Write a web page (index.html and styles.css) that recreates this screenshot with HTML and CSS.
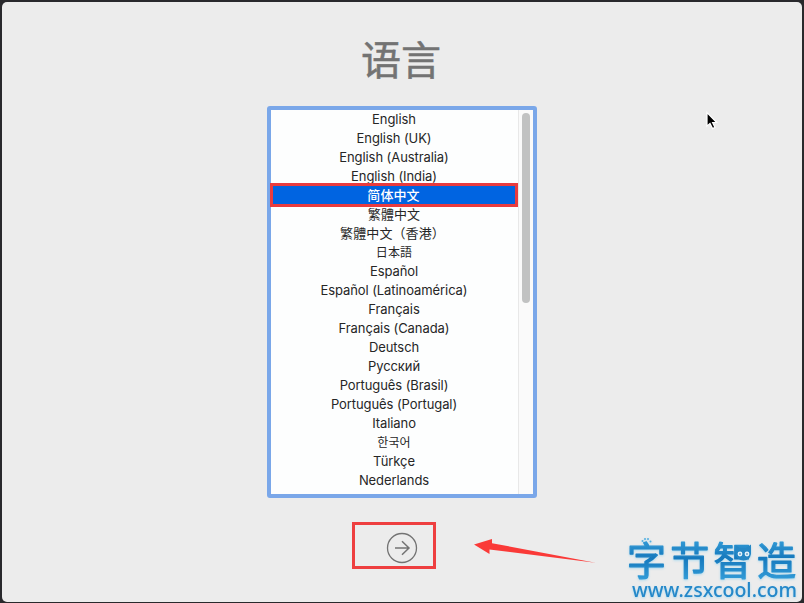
FILE: index.html
```
<!DOCTYPE html>
<html lang="zh-CN">
<head>
<meta charset="utf-8">
<title>语言</title>
<link rel="stylesheet" href="styles.css">
</head>
<body>
<main class="window">
  <h1 class="title">语言</h1>
  <div class="listbox">
    <ul class="languages">
      <li>English</li>
      <li>English (UK)</li>
      <li>English (Australia)</li>
      <li>English (India)</li>
      <li class="selected cjk">简体中文</li>
      <li class="cjk" lang="zh-TW">繁體中文</li>
      <li class="cjk wide" lang="zh-TW">繁體中文（香港）</li>
      <li class="cjk small" lang="ja">日本語</li>
      <li>Español</li>
      <li>Español (Latinoamérica)</li>
      <li>Français</li>
      <li>Français (Canada)</li>
      <li>Deutsch</li>
      <li>Русский</li>
      <li>Português (Brasil)</li>
      <li>Português (Portugal)</li>
      <li>Italiano</li>
      <li class="cjk small" lang="ko">한국어</li>
      <li>Türkçe</li>
      <li>Nederlands</li>
    </ul>
    <div class="track"><div class="thumb"></div></div>
  </div>
  <div class="next">
    <svg width="32" height="32" viewBox="0 0 32 32" fill="none" stroke="#737373">
      <circle cx="16" cy="16" r="14.5" stroke-width="1.3"/>
      <path d="M9 16H23M16 9.2L23 16L16 22.8" stroke-width="1.5"/>
    </svg>
  </div>
  <svg class="pointer-arrow" width="122" height="28" viewBox="0 0 122 28">
    <path d="M0 9.500L18 4V8.200L121.500 27.800L15.500 14.500V19Z" fill="#fa3a38"/>
  </svg>
  <svg class="cursor" width="16" height="22" viewBox="0 0 16 22">
    <path d="M2 1.500V15.200L5 12.400L7.600 17.600L10 16.400L7.600 11.500H11.700Z" fill="#000" stroke="#fff" stroke-width="1.2"/>
  </svg>
  <svg class="watermark" width="184" height="72" viewBox="620 531 184 72">
    <defs>
      <linearGradient id="blue" x1="0" y1="0" x2="0" y2="1">
        <stop offset="0" stop-color="#42ade4"/>
        <stop offset=".5" stop-color="#1679bd"/>
        <stop offset="1" stop-color="#3aa5df"/>
      </linearGradient>
    </defs>
    <text class="brand" x="627" y="575">字节智造</text>
    <g fill="#55afe0">
      <circle cx="642.500" cy="541" r="1"/><circle cx="645" cy="539" r="1"/><circle cx="648" cy="539" r="1"/><circle cx="650.500" cy="541.500" r="1"/>
    </g>
    <path d="M735.500 545L740 548H746L751 544.500V554Q750 560 743.500 560.500Q737 560 735.500 554Z" fill="#2587c5"/>
    <circle cx="740" cy="554" r="2.400" fill="#e4f3fb"/><circle cx="747" cy="554" r="2.400" fill="#e4f3fb"/>
    <circle cx="740" cy="554" r=".8" fill="#17699f"/><circle cx="747" cy="554" r=".8" fill="#17699f"/>
    <text class="site" x="632" y="596.500" textLength="165" lengthAdjust="spacingAndGlyphs">www.zsxcool.com</text>
  </svg>
</main>
</body>
</html>
```
FILE: styles.css
```
* { box-sizing: border-box; }
body {
  margin: 0;
  padding: 2px 2px 1px;
  height: 603px;
  background: #29292c;
  overflow: hidden;
  font-family: Inter, "Noto Sans CJK SC", sans-serif;
}
.window {
  position: relative;
  display: flex;
  flex-direction: column;
  align-items: center;
  height: 600px;
  border-radius: 5px;
  background: #ececec;
}
.title {
  margin: 26px 2px 0 0;
  height: 78px;
  font: 400 40px/60px "Noto Sans CJK SC", sans-serif;
  color: #737373;
  -webkit-text-stroke: .5px #737373;
}
.listbox {
  display: flex;
  width: 270px;
  height: 392px;
  border: 4px solid #7aa7e9;
  border-radius: 3px;
  background: #fdfefe;
}
.languages {
  flex: 1;
  margin: 0;
  padding: 0;
  list-style: none;
  text-align: center;
  font-size: 13px;
  line-height: 19px;
  letter-spacing: -.08px;
  color: #262626;
}
.languages li { height: 19px; padding-right: 1px; white-space: nowrap; }
.languages .cjk {
  padding-right: 1px;
  font-family: "Noto Sans CJK SC", sans-serif;
  line-height: 17px;
  letter-spacing: .1px;
}
.languages .wide { padding-right: 4px; }
.languages .small { font-size: 12px; }
.languages .selected {
  position: relative;
  height: 24px;
  margin: -3px 0 -2px -1px;
  border: 3px solid #e93b3e;
  background: #0064e1;
  color: #fff;
  font-weight: 500;
  line-height: 18px;
}
.track {
  width: 15px;
  padding: 3px 3px 0;
  border-left: 1px solid #e8e8e8;
  background: #fafafa;
}
.thumb {
  width: 8px;
  height: 190px;
  border-radius: 4px;
  background: #c1c2c2;
}
.next {
  display: flex;
  align-items: center;
  justify-content: center;
  width: 84px;
  height: 47px;
  margin: 24px 0 0 -16px;
  padding: 4px 0 0 16px;
  border: 3px solid #ee3f40;
}
.pointer-arrow { position: absolute; left: 472px; top: 533px; }
.cursor { position: absolute; left: 703px; top: 109px; }
.watermark {
  position: absolute;
  left: 618px;
  top: 529px;
  overflow: visible;
  filter: drop-shadow(0 1px 1px #a9d9ef);
}
.brand {
  font: 400 39px "Noto Sans CJK SC", sans-serif;
  letter-spacing: 4.300px;
  fill: url(#blue);
  stroke: url(#blue);
  stroke-width: 1.2px;
  stroke-linejoin: round;
}
.site {
  font: 500 20px "Noto Sans", sans-serif;
  fill: #2588c9;
}
```
